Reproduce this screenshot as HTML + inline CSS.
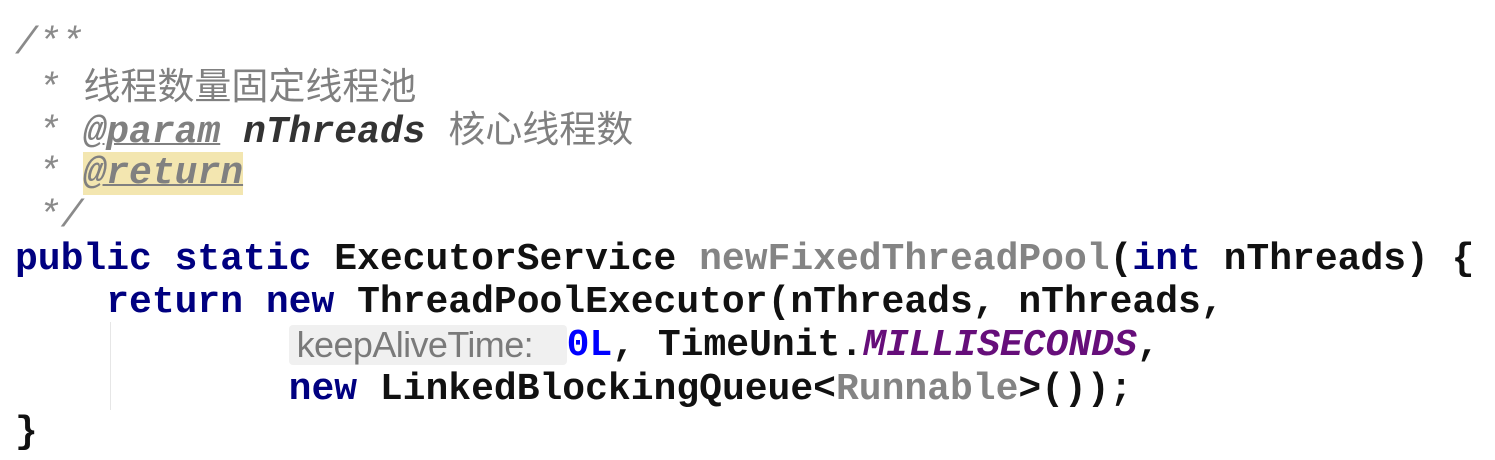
<!DOCTYPE html>
<html><head><meta charset="utf-8"><style>
body{margin:0;background:#fff;width:1495px;height:460px;overflow:hidden;position:relative}
.c{position:absolute;left:15px;top:22px;font-family:"Liberation Mono",monospace;font-size:38px;line-height:43.2px;font-weight:bold;color:#111}
.l{height:43.2px;white-space:pre}
.cm{color:#8a8a8a;font-weight:normal;font-style:italic}
.cn{font-family:"Liberation Sans","Noto Sans CJK SC",sans-serif;font-style:normal;font-size:37px;color:#808080;font-weight:normal}
.tag{color:#808080;font-weight:bold;font-style:italic;text-decoration:underline;text-decoration-thickness:2px}
.pn{color:#333;font-weight:bold;font-style:italic}
.hl{background:#f3e6b0}
.k{color:#000080}
.g{color:#848484}
.n{color:#0000ff}
.p{color:#660e7a;font-style:italic}
.hint{display:inline-block;width:266px;line-height:40px;font-family:"Liberation Sans",sans-serif;font-weight:normal;font-size:36px;color:#7a7a7a;background:#f0f0f0;border-radius:4px;padding:0 4px 0 8px;letter-spacing:-0.6px;vertical-align:top;margin-top:1px;overflow:hidden}
.guide{position:absolute;left:110px;top:322px;width:1px;height:88px;background:#e6e6e6}
</style></head><body>
<div class="guide"></div>
<div class="c"><div class="l cm">/**</div><div class="l cm"> * <span class="cn">线程数量固定线程池</span></div><div class="l cm"> * <span class="tag">@param</span> <span class="pn">nThreads</span> <span class="cn">核心线程数</span></div><div class="l cm"> * <span class="tag hl">@return</span></div><div class="l cm"> */</div><div class="l"><span class="k">public static</span> ExecutorService <span class="g">newFixedThreadPool</span>(<span class="k">int</span> nThreads) {</div><div class="l">    <span class="k">return new</span> ThreadPoolExecutor(nThreads, nThreads,</div><div class="l">            <span class="hint">keepAliveTime:</span><span class="n">0L</span>, TimeUnit.<span class="p">MILLISECONDS</span>,</div><div class="l">            <span class="k">new</span> LinkedBlockingQueue&lt;<span class="g">Runnable</span>&gt;());</div><div class="l">}</div></div>
</body></html>
